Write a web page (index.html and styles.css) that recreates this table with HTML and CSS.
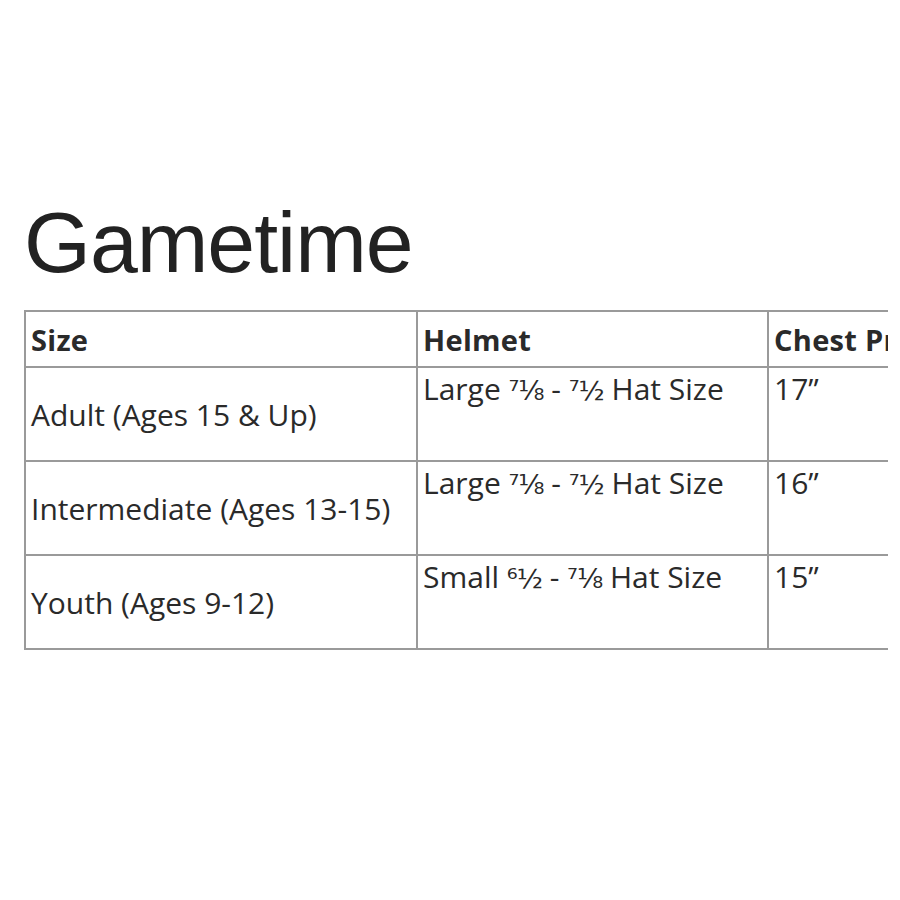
FILE: index.html
```html
<!DOCTYPE html>
<html>
<head>
<meta charset="utf-8">
<link rel="stylesheet" href="styles.css">
</head>
<body>
<div class="page">
  <h1 class="title">Gametime</h1>
  <div class="scroller">
    <table class="sizes">
      <tr class="head">
        <th class="c1">Size</th>
        <th class="c2">Helmet</th>
        <th class="c3">Chest Protector</th>
        <th class="c4">Shoulder Pads</th>
      </tr>
      <tr>
        <td class="c1 mid">Adult (Ages 15 &amp; Up)</td>
        <td class="c2 top">Large <span class="frac">⁷⅛</span> - <span class="frac">⁷½</span> Hat Size</td>
        <td class="c3 top">17”</td>
        <td class="c4 top">Large</td>
      </tr>
      <tr>
        <td class="c1 mid">Intermediate (Ages 13-15)</td>
        <td class="c2 top">Large <span class="frac">⁷⅛</span> - <span class="frac">⁷½</span> Hat Size</td>
        <td class="c3 top">16”</td>
        <td class="c4 top">Medium</td>
      </tr>
      <tr>
        <td class="c1 mid">Youth (Ages 9-12)</td>
        <td class="c2 top">Small <span class="frac">⁶½</span> - <span class="frac">⁷⅛</span> Hat Size</td>
        <td class="c3 top">15”</td>
        <td class="c4 top">Small</td>
      </tr>
    </table>
  </div>
</div>
</body>
</html>
```
FILE: styles.css
```css
html, body {
  margin: 0;
  padding: 0;
  background: #ffffff;
}

.page {
  padding: 199px 0 0 24px;
  width: 864px;
}

.title {
  margin: 0;
  font-family: "Liberation Sans", Arial, sans-serif;
  font-weight: normal;
  font-size: 86px;
  letter-spacing: -1px;
  line-height: 86px;
  height: 111px;
  color: #222222;
}

.scroller {
  width: 864px;
  overflow: hidden;
}

.sizes {
  border-collapse: collapse;
  font-family: "Open Sans", "Liberation Sans", sans-serif;
  font-size: 30px;
  color: #2a2a2a;
  table-layout: fixed;
  width: 1450px;
}

.sizes th,
.sizes td {
  border: 2px solid #9a9a9a;
  padding: 0 5px;
  text-align: left;
  white-space: nowrap;
  overflow: hidden;
}

.c1 { width: 380px; }
.c2 { width: 339px; }
.c3 { width: 341px; }
.c4 { width: 341px; }

.head th {
  height: 54px;
  font-weight: 700;
  font-size: 29px;
  letter-spacing: 0.3px;
  vertical-align: middle;
  padding-top: 0;
}

.sizes td {
  height: 92px;
}

.mid {
  vertical-align: middle;
}

.top {
  vertical-align: top;
  padding-top: 0;
}

.frac {
  font-family: "DejaVu Sans", sans-serif;
  font-size: 27px;
  letter-spacing: -1px;
}
```
